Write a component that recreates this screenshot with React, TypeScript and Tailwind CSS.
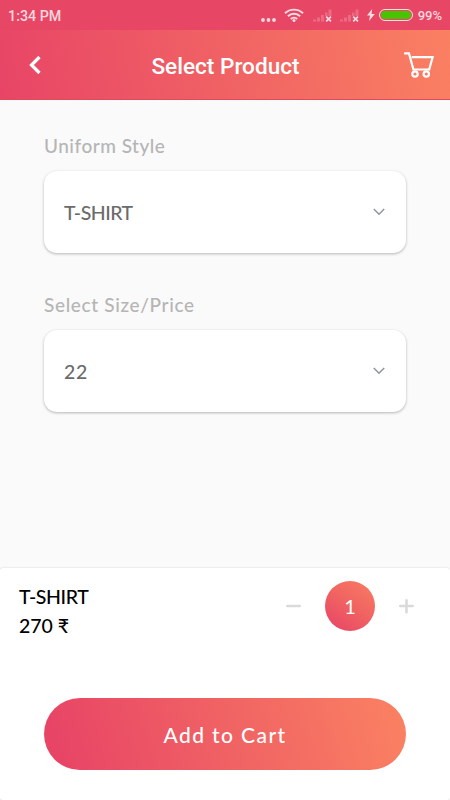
import React from 'react';

const Signal: React.FC = () => (
  <svg width="20" height="14" viewBox="0 0 20 14" fill="none">
    <g fill="#fff" fillOpacity="0.2">
      <rect x="0" y="10.5" width="3" height="2" />
      <rect x="4" y="8.5" width="3" height="4" />
      <rect x="8" y="6" width="3" height="6.5" />
      <rect x="12" y="3.5" width="2.5" height="3.5" />
      <rect x="15.5" y="0.5" width="3" height="6.5" />
    </g>
    <path d="M13.2 7.6l4.8 4.8m0-4.8l-4.8 4.8" stroke="#fbdde3" strokeWidth="1.6" />
  </svg>
);

const StatusBar: React.FC = () => (
  <div className="flex h-[30px] items-center bg-[#e74665] pl-2 pr-2 font-['Roboto',sans-serif] font-medium text-[#fbd7de]">
    <span className="flex-1 pt-[2px] text-[14.3px] leading-none">1:34 PM</span>
    <svg className="mr-2 mt-[9px]" width="15" height="4" viewBox="0 0 15 4" fill="#fbd7de">
      <circle cx="2" cy="2" r="1.9" />
      <circle cx="7.5" cy="2" r="1.9" />
      <circle cx="13" cy="2" r="1.9" />
    </svg>
    <svg className="mr-[9px]" width="20" height="14" viewBox="0 0 20 14" fill="none" stroke="#fbdde3" strokeWidth="1.9">
      <path d="M1 5.3a12.8 12.8 0 0 1 18 0" />
      <path d="M3.9 8.2a8.7 8.7 0 0 1 12.2 0" />
      <path d="M6.8 11a4.6 4.6 0 0 1 6.4 0" />
      <circle cx="10" cy="12.4" r="1.5" fill="#fbdde3" stroke="none" />
    </svg>
    <div className="mr-[7px] mt-px"><Signal /></div>
    <div className="mr-[7px] mt-px"><Signal /></div>
    <svg className="mr-[4px]" width="8" height="12" viewBox="0 0 8 12" fill="#fbdde3">
      <path d="M5.2 0L0 6.6h3.1L2 12l5.8-7H4.6z" />
    </svg>
    <div className="mr-[5px] h-3 w-[34px] rounded-full border-[1.5px] border-[#fbdde3] p-px">
      <div className="h-full rounded-full bg-[#47c400]" />
    </div>
    <span className="pt-px text-[13px] leading-none">99%</span>
  </div>
);

const Header: React.FC = () => (
  <header className="flex h-[70px] items-center justify-between border-b border-[#e04a5c] bg-[linear-gradient(80deg,#e84566_0%,#f06264_50%,#fa8062_100%)] pl-7 pr-4 text-white">
    <button aria-label="Back">
      <svg width="14" height="20" viewBox="0 0 14 20" fill="none" stroke="currentColor" strokeWidth="3.2">
        <path d="M11.5 2L3.5 10l8 8" />
      </svg>
    </button>
    <h1 className="pl-[6px] pt-1 font-['Roboto',sans-serif] text-[22.6px] font-medium">Select Product</h1>
    <button aria-label="Cart">
      <svg width="31" height="27" viewBox="0 0 31 27" fill="none" stroke="currentColor" strokeWidth="2.2">
        <path d="M2 2.4h4l4.4 16.1h15.8L29.6 6.2H9.6" strokeLinecap="round" />
        <circle cx="12" cy="23" r="2.7" />
        <circle cx="23.3" cy="23" r="2.7" />
      </svg>
    </button>
  </header>
);

const Field: React.FC<{ label: string; value: string; labelClass: string; valueClass: string }> = ({
  label,
  value,
  labelClass,
  valueClass,
}) => (
  <div>
    <div className={`h-6 text-[19px] font-medium leading-6 text-[#b5b5b5] ${labelClass}`}>{label}</div>
    <div className="mt-[13px] flex h-[82px] items-center justify-between rounded-[13px] bg-white pl-5 pr-[21px] shadow-[0_1px_3px_rgba(0,0,0,0.28)]">
      <span className={`pt-[2px] text-[19.5px] font-medium leading-6 text-[#6b6b6b] ${valueClass}`}>{value}</span>
      <svg width="12" height="8" viewBox="0 0 12 8" fill="none" stroke="#91949e" strokeWidth="1.5">
        <path d="M0.8 1L6 6.2 11.2 1" />
      </svg>
    </div>
  </div>
);

export default function App() {
  return (
    <div className="flex h-[800px] w-[450px] flex-col overflow-hidden bg-[#fafafa] font-['Lato',sans-serif]">
      <StatusBar />
      <Header />

      <main className="flex flex-1 flex-col gap-10 px-11 pt-[34px]">
        <Field label="Uniform Style" value="T-SHIRT" labelClass="tracking-[0.5px]" valueClass="tracking-[-0.5px]" />
        <Field label="Select Size/Price" value="22" labelClass="tracking-[0.65px]" valueClass="tracking-[0.6px]" />
      </main>

      {/* Order summary */}
      <section className="h-[232px] rounded-[3px] bg-white shadow-[0_0_2px_rgba(0,0,0,0.18)]">
        <div className="flex h-[130px] items-start justify-between pl-[19px] pr-9 pt-[13px]">
          <div className="pt-px text-[19.5px] font-medium leading-[29px] text-black">
            <div className="tracking-[-0.4px]">T-SHIRT</div>
            <div>270 ₹</div>
          </div>
          <div className="flex items-center gap-6 text-[#dadada]">
            <button aria-label="Decrease">
              <svg width="15" height="15" viewBox="0 0 15 15" stroke="currentColor" strokeWidth="2.6" strokeLinecap="round">
                <path d="M1.3 7h12.4" />
              </svg>
            </button>
            <div className="flex h-[50px] w-[50px] items-center justify-center rounded-full bg-[linear-gradient(35deg,#e84566_5%,#f06262_50%,#f97d63_100%)] text-[20px] text-white">
              1
            </div>
            <button aria-label="Increase">
              <svg width="15" height="15" viewBox="0 0 15 15" stroke="currentColor" strokeWidth="2.6" strokeLinecap="round">
                <path d="M1.3 7h12.4M7.5 1.3v12" />
              </svg>
            </button>
          </div>
        </div>
        <div className="px-11">
          <button className="h-[72px] w-full rounded-full bg-[linear-gradient(75deg,#e84566_5%,#f06264_50%,#fa8062_97%)] pt-[2px] text-[21px] font-medium tracking-[1.4px] text-white">
            Add to Cart
          </button>
        </div>
      </section>
    </div>
  );
}
